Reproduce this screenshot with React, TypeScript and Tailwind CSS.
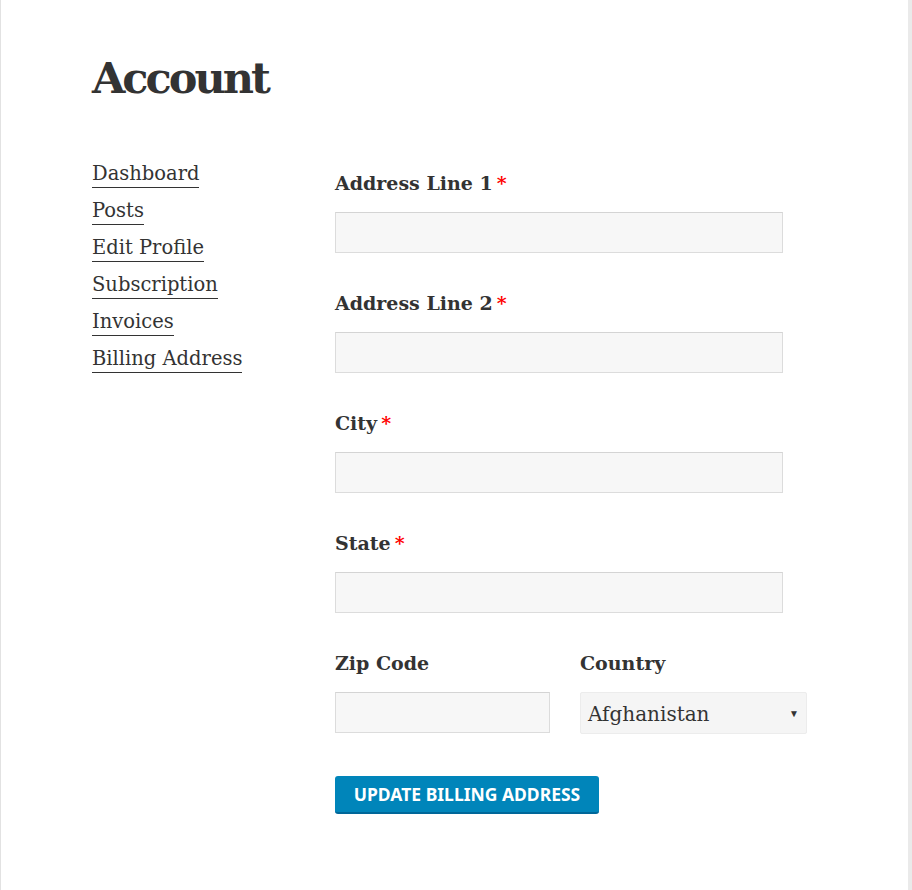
import { type ReactNode } from 'react';

const NAV = ['Dashboard', 'Posts', 'Edit Profile', 'Subscription', 'Invoices', 'Billing Address'];

const serif = "font-['DejaVu_Serif','Liberation_Serif',serif]";

function Label({ children, required }: { children: ReactNode; required?: boolean }) {
  return (
    <label className="block text-[19px] font-bold leading-[24px] text-[#333]">
      {children}
      {required && <span className="ml-[4px] text-[#f00]">*</span>}
    </label>
  );
}

function TextInput({ className = '' }: { className?: string }) {
  return (
    <input
      type="text"
      className={`mt-[17px] block h-[41px] border border-[#dcdcdc] border-t-[#d4d4d4] bg-[#f7f7f7] outline-none ${className}`}
    />
  );
}

export default function App() {
  return (
    <div className={`flex h-[890px] w-[912px] bg-[#eaeaea] ${serif}`}>
      <div className="h-full w-[908px] border-l border-[#e2e2e2] bg-white pl-[91px] text-[#333]">
        <h1 className="mt-[54px] text-[43px] font-bold leading-[48px] tracking-[-3px]">Account</h1>

        <div className="mt-[59px] flex">
          <nav className="flex w-[243px] flex-col">
            {NAV.map((item) => (
              <a
                key={item}
                href="#"
                className="mb-[10px] self-start border-b border-[#333] text-[19.5px] leading-[26px] text-[#333]"
              >
                {item}
              </a>
            ))}
          </nav>

          <form className="w-[448px] pt-[10px]" onSubmit={(e) => e.preventDefault()}>
            <Label required>Address Line 1</Label>
            <TextInput className="w-[448px]" />

            <div className="mt-[38px]">
              <Label required>Address Line 2</Label>
              <TextInput className="w-[448px]" />
            </div>

            <div className="mt-[38px]">
              <Label required>City</Label>
              <TextInput className="w-[448px]" />
            </div>

            <div className="mt-[38px]">
              <Label required>State</Label>
              <TextInput className="w-[448px]" />
            </div>

            <div className="mt-[38px] flex gap-[30px]">
              <div>
                <Label>Zip Code</Label>
                <TextInput className="w-[215px]" />
              </div>
              <div>
                <Label>Country</Label>
                <div className="relative mt-[17px] flex h-[42px] w-[227px] items-center rounded-[2px] border border-[#ececec] bg-[#f5f5f5] pl-[7px] pt-[1px] text-[20px] text-[#333]">
                  Afghanistan
                  <span className="absolute right-[7px] top-[13px] font-['Liberation_Sans',sans-serif] text-[10px]">▼</span>
                </div>
              </div>
            </div>

            <button
              type="submit"
              className="mt-[42px] h-[38px] w-[264px] rounded-[3px] border-b-2 border-[#006799] bg-[#0085ba] font-['Noto_Sans',sans-serif] text-[17.5px] font-bold uppercase text-white"
            >
              Update Billing Address
            </button>
          </form>
        </div>
      </div>
    </div>
  );
}
